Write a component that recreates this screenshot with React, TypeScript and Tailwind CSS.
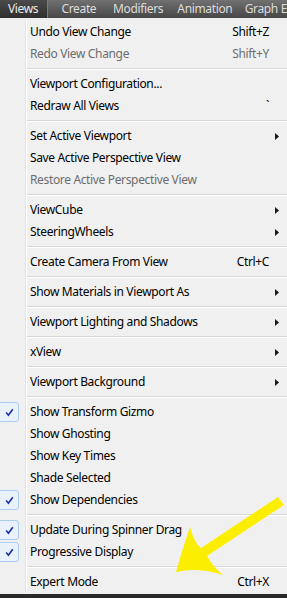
import React from "react";

type Item =
  | { sep: true }
  | {
      sep?: false;
      label: string;
      shortcut?: string;
      sub?: boolean;
      disabled?: boolean;
      checked?: boolean;
    };

const items: Item[] = [
  { label: "Undo View Change", shortcut: "Shift+Z" },
  { label: "Redo View Change", shortcut: "Shift+Y", disabled: true },
  { sep: true },
  { label: "Viewport Configuration..." },
  { label: "Redraw All Views", shortcut: "`" },
  { sep: true },
  { label: "Set Active Viewport", sub: true },
  { label: "Save Active Perspective View" },
  { label: "Restore Active Perspective View", disabled: true },
  { sep: true },
  { label: "ViewCube", sub: true },
  { label: "SteeringWheels", sub: true },
  { sep: true },
  { label: "Create Camera From View", shortcut: "Ctrl+C" },
  { sep: true },
  { label: "Show Materials in Viewport As", sub: true },
  { sep: true },
  { label: "Viewport Lighting and Shadows", sub: true },
  { sep: true },
  { label: "xView", sub: true },
  { sep: true },
  { label: "Viewport Background", sub: true },
  { sep: true },
  { label: "Show Transform Gizmo", checked: true },
  { label: "Show Ghosting" },
  { label: "Show Key Times" },
  { label: "Shade Selected" },
  { label: "Show Dependencies", checked: true },
  { sep: true },
  { label: "Update During Spinner Drag", checked: true },
  { label: "Progressive Display", checked: true },
  { sep: true },
  { label: "Expert Mode", shortcut: "Ctrl+X" },
];

function Gutter({ children }: { children?: React.ReactNode }) {
  return (
    <>
      <div className="w-[25px] h-full flex items-center shrink-0">{children}</div>
      <div className="w-[1px] h-full bg-[#e2e3e3] shrink-0" />
      <div className="w-[1px] h-full bg-white shrink-0" />
    </>
  );
}

function Check() {
  return (
    <div className="-ml-[3px] w-[22px] h-[20px] rounded-[3px] border border-[#aecbee] bg-[#e9f1fb] flex items-center justify-center">
      <svg width="9" height="9" viewBox="0 0 9 9" className="ml-[2px]">
        <path d="M1.2 4.6 L3.4 7.3 L7.8 1.2" fill="none" stroke="#1a2fa6" strokeWidth="1.6" />
      </svg>
    </div>
  );
}

export default function App() {
  return (
    <div
      className="relative w-[287px] h-[598px] overflow-hidden bg-[#f0f0f0] flex flex-col tracking-[-0.35px]"
      style={{ fontFamily: '"Noto Sans", "Open Sans", sans-serif' }}
    >
      <div className="h-[18px] shrink-0 flex items-stretch text-[12px] leading-[18px] bg-gradient-to-b from-[#717171] to-[#474747] text-[#dcdcdc] whitespace-nowrap">
        <div className="w-[48px] pl-[8px] bg-gradient-to-b from-[#4a4a4a] to-[#2f2f2f] border-r border-[#7a7a7a] text-[#ececec]">
          Views
        </div>
        <div className="w-[14px]" />
        <div className="w-[52px]">Create</div>
        <div className="w-[65px]">Modifiers</div>
        <div className="w-[68px]">Animation</div>
        <div>Graph E</div>
      </div>

      <div className="flex flex-col pt-[3px] pb-[1px] text-[12px] text-black">
        {items.map((it, i) =>
          it.sep ? (
            <div key={i} className="h-[8px] flex items-stretch">
              <Gutter />
              <div className="flex-1 flex flex-col justify-center">
                <div className="h-[1px] bg-[#d7d7d7]" />
                <div className="h-[1px] bg-white" />
              </div>
            </div>
          ) : (
            <div key={i} className="h-[22px] flex items-stretch">
              <Gutter>{it.checked ? <Check /> : null}</Gutter>
              <div
                className={
                  "flex-1 pl-[3px] flex items-center whitespace-nowrap " +
                  (it.disabled ? "text-[#6d6d6d]" : "text-black")
                }
              >
                {it.label}
              </div>
              <div
                className={
                  "flex items-center whitespace-nowrap " +
                  (it.disabled ? "text-[#6d6d6d]" : "text-black")
                }
              >
                {it.shortcut ?? ""}
              </div>
              <div className="w-[18px] flex items-center pl-[6px]">
                {it.sub ? (
                  <svg width="4" height="7" viewBox="0 0 4 7">
                    <path d="M0 0 L4 3.5 L0 7 Z" fill="#1a1a1a" />
                  </svg>
                ) : null}
              </div>
            </div>
          )
        )}
      </div>

      <div className="flex-1 bg-[#2a2a2a]" />

      <svg
        className="absolute left-0 top-0 pointer-events-none"
        width="287"
        height="598"
        viewBox="0 0 287 598"
      >
        <path
          d="M176 572 Q182 550 190 527 Q194 543 201 548 L278 497 L284 505 L207 556 Q214 568 223 575 Q198 567 176 572 Z"
          fill="#fbee00"
        />
      </svg>
    </div>
  );
}
